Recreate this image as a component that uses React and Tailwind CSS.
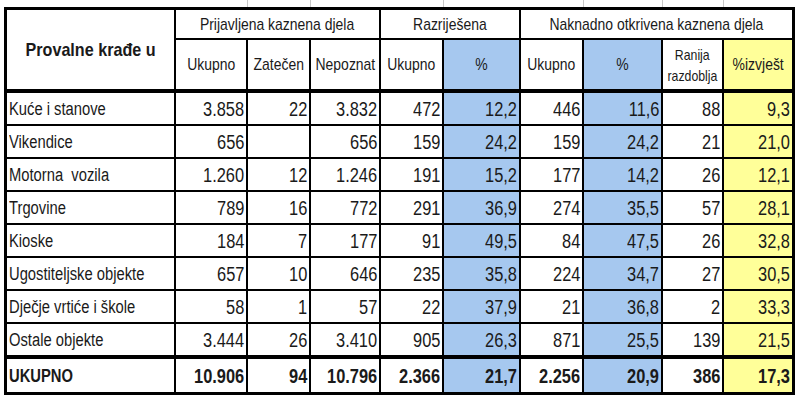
import React from "react";

const rows = [
  ["Kuće i stanove", "3.858", "22", "3.832", "472", "12,2", "446", "11,6", "88", "9,3"],
  ["Vikendice", "656", "", "656", "159", "24,2", "159", "24,2", "21", "21,0"],
  ["Motorna  vozila", "1.260", "12", "1.246", "191", "15,2", "177", "14,2", "26", "12,1"],
  ["Trgovine", "789", "16", "772", "291", "36,9", "274", "35,5", "57", "28,1"],
  ["Kioske", "184", "7", "177", "91", "49,5", "84", "47,5", "26", "32,8"],
  ["Ugostiteljske objekte", "657", "10", "646", "235", "35,8", "224", "34,7", "27", "30,5"],
  ["Dječje vrtiće i škole", "58", "1", "57", "22", "37,9", "21", "36,8", "2", "33,3"],
  ["Ostale objekte", "3.444", "26", "3.410", "905", "26,3", "871", "25,5", "139", "21,5"],
];
const total = ["UKUPNO", "10.906", "94", "10.796", "2.366", "21,7", "2.256", "20,9", "386", "17,3"];

const font = { fontFamily: '"Liberation Sans", Arial, sans-serif' };

function bgFor(i) {
  if (i === 5 || i === 7) return "bg-[#a6c8ef]";
  if (i === 9) return "bg-[#ffff99]";
  return "bg-white";
}

function DataRow({ r, last, bold }) {
  return r.map((v, i) => {
    const br = i === 9 ? "" : "border-r-2";
    const bb = bold ? "" : last ? "border-b-4" : "border-b-2";
    if (i === 0) {
      return (
        <div key={i} className={`${br} ${bb} border-black bg-white flex items-center pl-[2px] text-[18px] leading-none ${bold ? "font-bold" : ""}`}>
          <span className="inline-block whitespace-pre scale-x-[0.82] origin-left">{v}</span>
        </div>
      );
    }
    return (
      <div key={i} className={`${br} ${bb} border-black ${bgFor(i)} flex items-center justify-end pr-[2px] text-[20px] leading-none ${bold ? "font-bold" : ""}`}>
        <span className="inline-block whitespace-pre scale-x-[0.82] origin-right">{v}</span>
      </div>
    );
  });
}

function H({ children, className = "" }) {
  return (
    <div className={`border-black flex items-center justify-center text-[17px] leading-none ${className}`}>
      <span className="inline-block whitespace-pre scale-x-[0.82] origin-center">{children}</span>
    </div>
  );
}

export default function App() {
  const cols = "grid-cols-[169px_72px_63px_70px_63px_77px_63px_79px_61px_68px]";
  return (
    <div className="w-[800px] h-[400px] bg-white pl-[4px] text-[#1a1a1a]" style={font}>
      <div className="h-[7px] w-[791px] grid grid-cols-[172px_72px_63px_70px_63px_77px_63px_79px_61px_71px]">
        <div />
        <div className="border-r border-[#c8c8c8]" />
        <div className="border-r border-[#c8c8c8]" />
        <div />
        <div className="border-r border-[#c8c8c8]" />
        <div />
        <div className="border-r border-[#c8c8c8]" />
        <div className="border-r border-[#c8c8c8]" />
        <div className="border-r border-[#c8c8c8]" />
        <div />
      </div>
      <div className={`w-[791px] border-[3px] border-black grid ${cols} grid-rows-[30px_53px_repeat(7,33px)_35px_33px]`}>
        <div className="row-span-2 border-r-2 border-b-4 border-black flex items-center justify-center font-bold text-[19px] leading-none">
          <span className="inline-block whitespace-pre scale-x-[0.85] origin-center">Provalne krađe u</span>
        </div>
        <H className="col-span-3 border-r-2 border-b-2">Prijavljena kaznena djela</H>
        <H className="col-span-2 border-r-2 border-b-2">Razriješena</H>
        <H className="col-span-4 border-b-2">Naknadno otkrivena kaznena djela</H>

        <H className="border-r-2 border-b-4">Ukupno</H>
        <H className="border-r-2 border-b-4">Zatečen</H>
        <H className="border-r-2 border-b-4">Nepoznat</H>
        <H className="border-r-2 border-b-4">Ukupno</H>
        <H className="border-r-2 border-b-4 bg-[#a6c8ef]">%</H>
        <H className="border-r-2 border-b-4">Ukupno</H>
        <H className="border-r-2 border-b-4 bg-[#a6c8ef]">%</H>
        <div className="border-r-2 border-b-4 border-black flex flex-col items-center justify-center gap-[6px] text-[15px] leading-none">
          <span className="inline-block scale-x-[0.82] origin-center">Ranija</span>
          <span className="inline-block scale-x-[0.82] origin-center">razdoblja</span>
        </div>
        <H className="border-b-4 bg-[#ffff99]">%izvješt</H>

        {rows.map((r, idx) => (
          <DataRow key={idx} r={r} last={idx === rows.length - 1} />
        ))}
        <DataRow r={total} bold />
      </div>
    </div>
  );
}
